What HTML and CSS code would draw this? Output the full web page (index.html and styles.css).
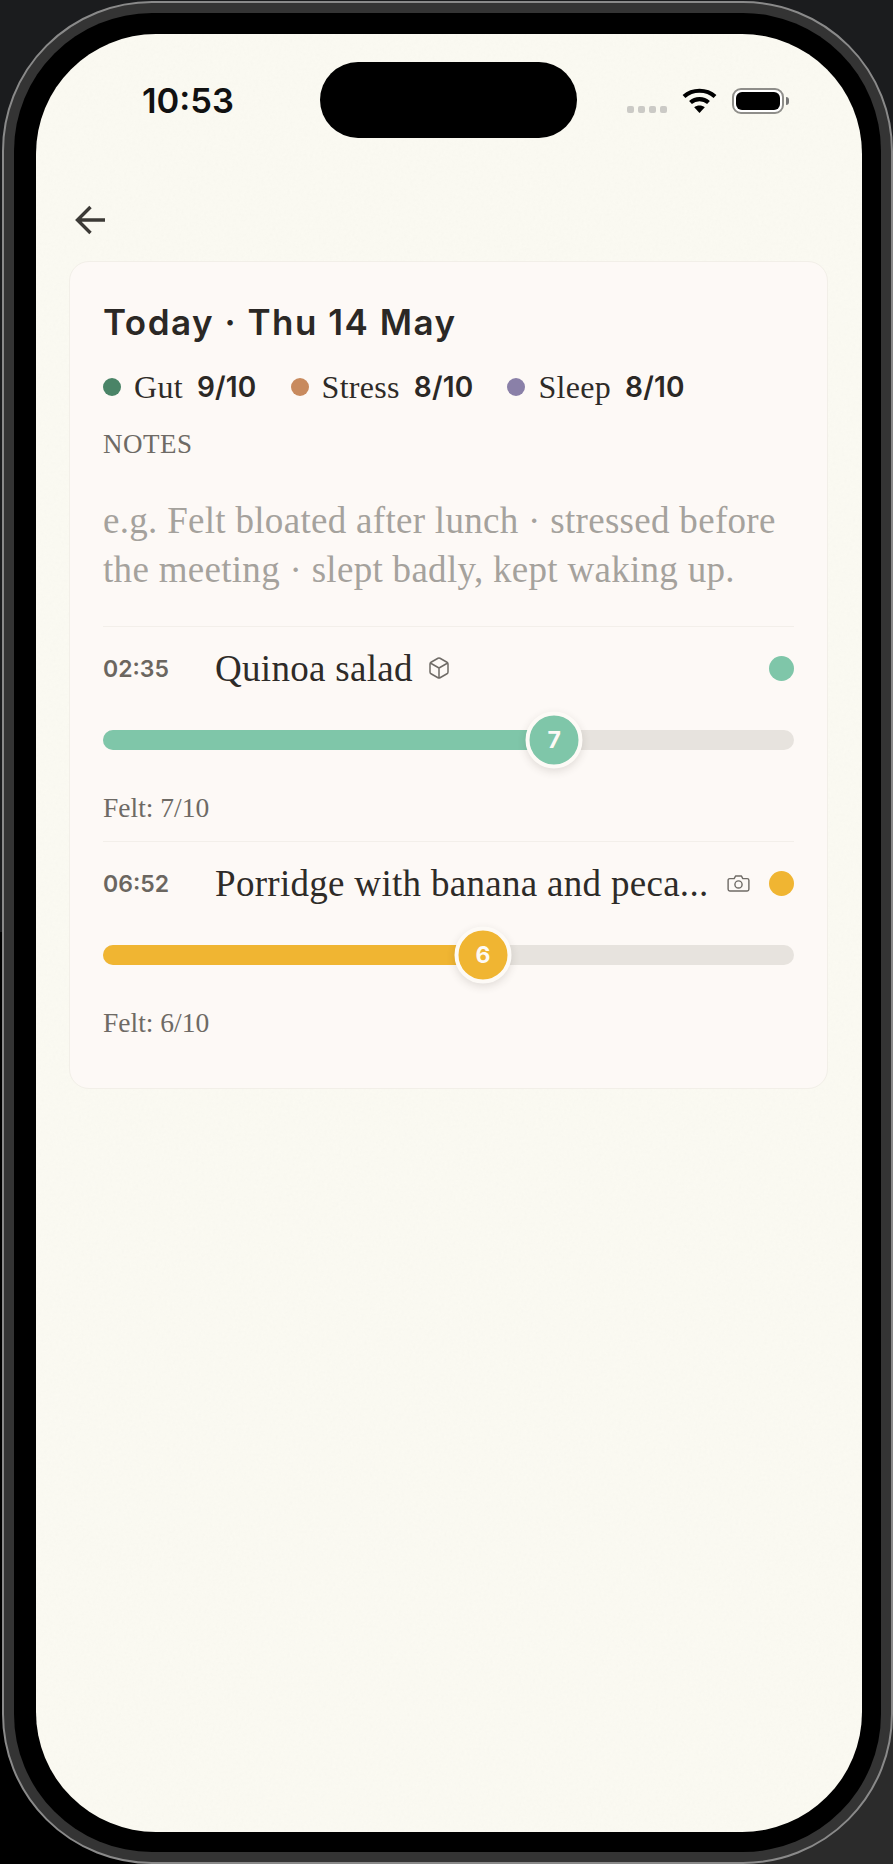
FILE: index.html
```html
<!DOCTYPE html>
<html lang="en">
<head>
<meta charset="utf-8">
<title>Today</title>
<link rel="stylesheet" href="styles.css">
</head>
<body>
<div class="device">
  <div class="bezel">
    <main class="screen">
      <svg class="grain" aria-hidden="true"><filter id="grain"><feTurbulence type="fractalNoise" baseFrequency=".35" numOctaves="2"/><feColorMatrix type="saturate" values="0"/></filter><rect width="100%" height="100%" filter="url(#grain)"/></svg>
      <div class="notch"></div>
      <header class="status">
        <span class="clock">10:53</span>
        <div class="status-icons">
          <div class="signal"><i></i><i></i><i></i><i></i></div>
          <svg class="wifi" viewBox="0 0 35 25"><path d="M2 8.500C10.500 .8 24.500 .8 33 8.500" fill="none" stroke="#000" stroke-width="4.200"/><path d="M8.500 14.500C13.500 10 21.500 10 26.500 14.500" fill="none" stroke="#000" stroke-width="4.200"/><path d="M12.200 19.300C15 16.800 20 16.800 22.800 19.300L17.500 25Z" fill="#000"/></svg>
          <div class="battery"><div class="battery-cell"></div></div>
          <div class="battery-tip"></div>
        </div>
      </header>
      <nav class="nav">
        <svg class="back" viewBox="0 0 32 30"><path d="M30 15H3M15.500 2 2.500 15l13 13" fill="none" stroke="#3c3a36" stroke-width="3.400"/></svg>
      </nav>
      <section class="card">
        <h1 class="title">Today · Thu 14 May</h1>
        <div class="legend">
          <span class="metric"><i class="dot dot-gut"></i><span class="metric-name">Gut</span><b class="metric-val">9/10</b></span>
          <span class="metric"><i class="dot dot-stress"></i><span class="metric-name">Stress</span><b class="metric-val">8/10</b></span>
          <span class="metric"><i class="dot dot-sleep"></i><span class="metric-name">Sleep</span><b class="metric-val">8/10</b></span>
        </div>
        <div class="notes-label">NOTES</div>
        <p class="notes">e.g. Felt bloated after lunch · stressed before<br>the meeting · slept badly, kept waking up.</p>

        <article class="entry">
          <div class="entry-head">
            <span class="entry-time">02:35</span>
            <span class="entry-name">Quinoa salad</span>
            <svg class="entry-icon cube" viewBox="0 0 24 24"><path d="M21 16V8a2 2 0 0 0-1-1.730l-7-4a2 2 0 0 0-2 0l-7 4A2 2 0 0 0 3 8v8a2 2 0 0 0 1 1.730l7 4a2 2 0 0 0 2 0l7-4A2 2 0 0 0 21 16zM3.300 7 12 12l8.700-5M12 22V12"/></svg>
            <i class="entry-dot green"></i>
          </div>
          <div class="track">
            <div class="fill green" style="width:65.3%"></div>
            <div class="thumb green" style="left:65.3%">7</div>
          </div>
          <div class="felt">Felt: 7/10</div>
        </article>

        <article class="entry">
          <div class="entry-head">
            <span class="entry-time">06:52</span>
            <span class="entry-name">Porridge with banana and peca...</span>
            <svg class="entry-icon camera" viewBox="0 0 24 18"><path d="M2.800 3.800h4.600L9 1h6l1.600 2.800h4.600A1.800 1.800 0 0 1 23 5.600v9.600a1.800 1.800 0 0 1-1.800 1.800H2.800A1.800 1.800 0 0 1 1 15.200V5.600a1.800 1.800 0 0 1 1.800-1.800z"/><circle cx="12" cy="10" r="3.800"/></svg>
            <i class="entry-dot amber"></i>
          </div>
          <div class="track">
            <div class="fill amber" style="width:55%"></div>
            <div class="thumb amber" style="left:55%">6</div>
          </div>
          <div class="felt">Felt: 6/10</div>
        </article>
      </section>
    </main>
  </div>
</div>
</body>
</html>
```
FILE: styles.css
```css
* { box-sizing: border-box; }
html, body { margin: 0; height: 1864px; overflow: hidden; }
body {
  width: 893px;
  padding: 1px 0 0 2px;
  background:
    linear-gradient(#1b1c1e 0 50%, transparent 50%),
    linear-gradient(90deg, #000 50%, #2b2b2b 50%);
}
.device {
  height: 1863px;
  padding: 10px;
  border: 2px solid #8a8a8a;
  border-radius: 150px;
  background: #343434;
}
.bezel {
  height: 100%;
  padding: 21px 19px 20px 22px;
  border-radius: 138px;
  background: #000;
}
.screen {
  position: relative;
  height: 100%;
  border-radius: 120px;
  background: #fbfaf2;
  overflow: hidden;
}
.grain {
  position: absolute;
  inset: 0;
  width: 100%;
  height: 100%;
  opacity: .03;
}
.notch {
  position: absolute;
  top: 28px;
  left: 284px;
  width: 257px;
  height: 76px;
  border-radius: 38px;
  background: #000;
}
.status {
  position: relative;
  display: flex;
  justify-content: space-between;
  align-items: flex-start;
  height: 144px;
  padding: 48px 73px 0 106px;
}
.clock {
  font: 600 34.500px/38px Inter, sans-serif;
  color: #111;
}
.status-icons { display: flex; align-items: flex-start; padding-top: 6px; }
.signal { display: flex; gap: 4px; margin-top: 18px; margin-right: 15px; }
.signal i { width: 7px; height: 7px; border-radius: 2px; background: #cbcac6; }
.wifi { width: 35px; height: 25px; margin-right: 15px; }
.battery {
  width: 52px;
  height: 26px;
  padding: 2px;
  border: 2px solid #8f8e8a;
  border-radius: 9px;
  background: #fff;
}
.battery-cell { height: 100%; border-radius: 6px; background: #000; }
.battery-tip { width: 3px; height: 8px; margin: 9px 0 0 2px; border-radius: 0 3px 3px 0; background: #777; }
.nav { position: relative; display: flex; align-items: center; height: 83px; padding-left: 39px; }
.back { width: 32px; height: 30px; }
.card {
  position: relative;
  margin: 0 34px 0 33px;
  padding: 38px 33px 49px;
  border: 1px solid #f2efe8;
  border-radius: 20px;
  background: #fdf9f6;
}
.title {
  margin: 0;
  font: 600 35px/44px Inter, sans-serif;
  color: #2b2825;
  letter-spacing: 1.500px;
}
.legend { display: flex; gap: 34px; margin-top: 25px; height: 36px; }
.metric { display: flex; align-items: center; }
.dot { width: 18px; height: 18px; border-radius: 50%; margin-right: 13px; }
.dot-gut { background: #4a8467; }
.dot-stress { background: #c88a5e; }
.dot-sleep { background: #8a80a8; }
.metric-name { font: 400 32px/36px "Liberation Serif", serif; letter-spacing: .3px; color: #2e2b28; margin-right: 14px; }
.metric-val { font: 600 28px/36px Inter, sans-serif; letter-spacing: .2px; color: #2b2825; }
.notes-label {
  margin-top: 24px;
  font: 400 27px/30px "Liberation Serif", serif;
  color: #6e6a65;
  letter-spacing: .5px;
}
.notes {
  margin: 37px 0 0;
  padding-bottom: 32px;
  font: 400 37px/49px "Liberation Serif", serif;
  letter-spacing: .3px;
  color: #a5a29d;
}
.entry { border-top: 1px solid #f3efea; padding-top: 19px; }
.entry + .entry { margin-top: 17px; }
.entry-head { display: flex; align-items: center; height: 44px; }
.entry-time { flex: 0 0 112px; padding-top: 2px; font: 600 23px/44px Inter, sans-serif; color: #6b6660; }
.entry-name { padding-top: 2px; font: 400 37px/44px "Liberation Serif", serif; letter-spacing: .3px; color: #2e2b28; white-space: nowrap; }
.entry-icon { fill: none; stroke: #6f6b66; stroke-width: 1.500; stroke-linejoin: round; stroke-linecap: round; }
.cube { width: 24px; height: 24px; margin-left: 14px; }
.camera { width: 23px; height: 17px; margin-left: 18px; }
.entry-dot { width: 25px; height: 25px; margin-left: auto; border-radius: 50%; }
.green { background: #7fc6a9; }
.amber { background: #f0b532; }
.track {
  position: relative;
  height: 20px;
  margin-top: 40px;
  border-radius: 10px;
  background: #e7e3de;
}
.fill { height: 100%; border-radius: 10px; }
.thumb {
  position: absolute;
  top: 50%;
  width: 57px;
  height: 57px;
  border: 4px solid #fdfaf6;
  border-radius: 50%;
  transform: translate(-50%, -50%);
  box-shadow: 0 3px 8px rgba(60, 50, 40, .14);
  font: 700 23px/49px Inter, sans-serif;
  color: #fdfaf6;
  text-align: center;
}
.felt {
  margin-top: 42px;
  font: 400 27.500px/32px "Liberation Serif", serif;
  color: #6e6a65;
}
```
